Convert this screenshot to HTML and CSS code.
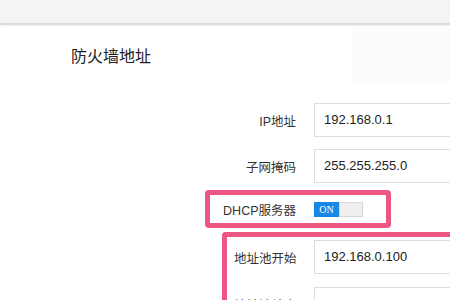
FILE: index.html
```html
<!DOCTYPE html>
<html lang="zh-CN">
<head>
    <meta charset="UTF-8">
    <meta name="viewport" content="width=device-width, initial-scale=1.0">
    <title>防火墙地址</title>
    <link rel="stylesheet" href="styles.css">
</head>
<body>
    <div class="topbar"></div>

    <div class="head">
        <h3 class="title">防火墙地址</h3>
        <div class="side"></div>
    </div>

    <div class="form">
        <div class="row">
            <label class="label">IP地址</label>
            <div class="input">192.168.0.1</div>
        </div>
        <div class="row">
            <label class="label">子网掩码</label>
            <div class="input">255.255.255.0</div>
        </div>

        <div class="mark dhcp">
            <label class="label">DHCP服务器</label>
            <div class="switch">
                <span class="on">ON</span>
                <span class="off"></span>
            </div>
        </div>

        <div class="mark pool">
            <div class="row">
                <label class="label">地址池开始</label>
                <div class="input">192.168.0.100</div>
            </div>
            <div class="row">
                <label class="label">地址池结束</label>
                <div class="input"></div>
            </div>
        </div>
    </div>
</body>
</html>
```

FILE: styles.css
```css
*{padding: 0px; margin: 0px; box-sizing: border-box;}
html, body{overflow: hidden; height: 300px;}
body{font-family: "Liberation Sans", "Noto Sans CJK SC", sans-serif; background: #fff; color: #333;}

.topbar{height: 25px; background: #f4f4f5; border-bottom: 2px solid #dcdcdc; box-shadow: 0 1px 2px rgba(0,0,0,0.08);}

.head{display: flex; justify-content: space-between; height: 57px; padding-top: 2px;}
.head .title{padding-left: 71px; align-self: center; font-size: 16px; font-weight: normal; color: #222;}
.head .side{width: 98px; background: #fcfcfc;}

.form{padding-left: 205px;}
.row{display: flex; align-items: center; gap: 18px;}
.row + .row{margin-top: 12px;}
.form > .row:first-child{margin-top: 21px;}
.label{flex-shrink: 0; width: 91px; text-align: right; font-size: 12.5px; white-space: nowrap; color: #333;}
.input{flex-shrink: 0; width: 220px; height: 34px; padding-left: 9px; border: 1px solid #dcdcdc; font-size: 13px; line-height: 32px; color: #222;}

.mark{border: 5px solid #ec5683; border-radius: 4px;}
.dhcp{display: flex; align-items: center; gap: 18px; width: 186px; height: 38px; margin-top: 7px;}
.dhcp .label{width: 86px;}

.switch{display: flex; flex-shrink: 0; width: 49px; height: 15px;}
.switch .on{width: 25px; background: #1688e6; color: #fff; font-family: "Liberation Serif", serif; font-size: 10px; line-height: 15px; text-align: center;}
.switch .off{flex: 1; background: #efefef; border: 1px solid #d8d8d8;}

.pool{width: 400px; margin-top: 4px; margin-left: 17px; padding: 3px 0 0 7px; border-bottom: none; border-radius: 4px 0 0 0;}
.pool .label{width: 62px; text-align: left;}
.pool .row + .row{margin-top: 13px;}
```
